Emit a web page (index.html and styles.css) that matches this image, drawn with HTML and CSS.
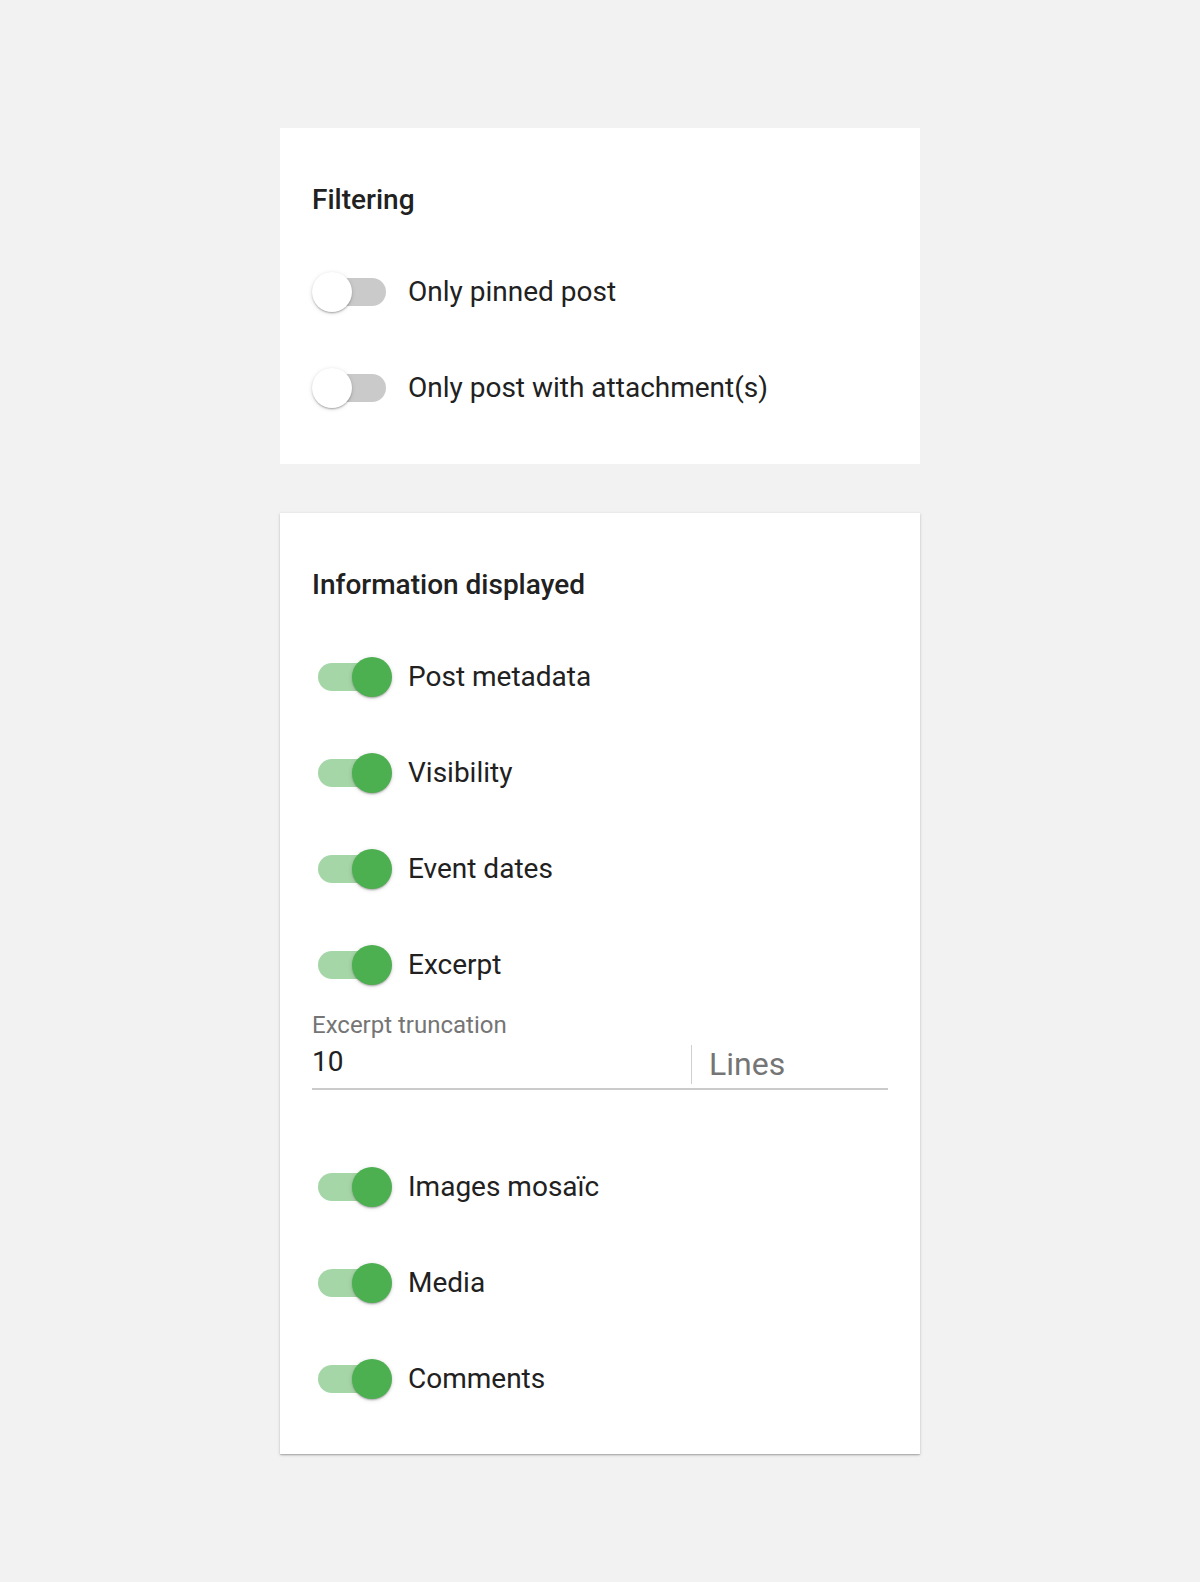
FILE: index.html
```html
<!DOCTYPE html>
<html lang="en">
<head>
<meta charset="utf-8">
<title>Settings</title>
<link rel="stylesheet" href="styles.css">
</head>
<body>
<main class="page">
  <section class="card card-flat">
    <h2 class="card-title">Filtering</h2>
    <div class="toggle-row">
      <span class="switch"><span class="track"></span><span class="thumb"></span></span>
      <span class="toggle-label">Only pinned post</span>
    </div>
    <div class="toggle-row">
      <span class="switch"><span class="track"></span><span class="thumb"></span></span>
      <span class="toggle-label">Only post with attachment(s)</span>
    </div>
  </section>

  <section class="card card-raised">
    <h2 class="card-title">Information displayed</h2>
    <div class="toggle-row">
      <span class="switch on"><span class="track"></span><span class="thumb"></span></span>
      <span class="toggle-label">Post metadata</span>
    </div>
    <div class="toggle-row">
      <span class="switch on"><span class="track"></span><span class="thumb"></span></span>
      <span class="toggle-label">Visibility</span>
    </div>
    <div class="toggle-row">
      <span class="switch on"><span class="track"></span><span class="thumb"></span></span>
      <span class="toggle-label">Event dates</span>
    </div>
    <div class="toggle-row">
      <span class="switch on"><span class="track"></span><span class="thumb"></span></span>
      <span class="toggle-label">Excerpt</span>
    </div>
    <div class="field">
      <label class="field-label">Excerpt truncation</label>
      <div class="field-row">
        <span class="field-value">10</span>
        <span class="field-adorn">Lines</span>
      </div>
    </div>
    <div class="toggle-row">
      <span class="switch on"><span class="track"></span><span class="thumb"></span></span>
      <span class="toggle-label">Images mosaïc</span>
    </div>
    <div class="toggle-row">
      <span class="switch on"><span class="track"></span><span class="thumb"></span></span>
      <span class="toggle-label">Media</span>
    </div>
    <div class="toggle-row">
      <span class="switch on"><span class="track"></span><span class="thumb"></span></span>
      <span class="toggle-label">Comments</span>
    </div>
  </section>
</main>
</body>
</html>
```

FILE: styles.css
```css
html, body {
  margin: 0;
  padding: 0;
}
body {
  background: #f2f2f2;
  font-family: Roboto, "Liberation Sans", Arial, sans-serif;
  color: #212121;
  min-height: 1582px;
}
.page {
  width: 640px;
  margin-left: 280px;
  padding-top: 128px;
  display: flex;
  flex-direction: column;
  gap: 49px;
}
.card {
  background: #fff;
  padding: 56px 32px 28px;
}
.card-raised {
  padding-bottom: 27px;
  box-shadow: 0 1px 3px rgba(0,0,0,0.18), 0 1px 1px rgba(0,0,0,0.10), 0 2px 2px -1px rgba(0,0,0,0.10);
}
.card-title {
  margin: 0 0 28px;
  font-size: 28px;
  line-height: 32px;
  font-weight: 500;
  color: #212121;
}
.toggle-row {
  height: 96px;
  display: flex;
  align-items: center;
}
.switch {
  position: relative;
  width: 96px;
  height: 40px;
  flex: none;
}
.track {
  position: absolute;
  left: 6px;
  top: 6px;
  width: 68px;
  height: 28px;
  border-radius: 14px;
  background: #cacaca;
}
.thumb {
  position: absolute;
  left: 0;
  top: 0;
  width: 40px;
  height: 40px;
  border-radius: 50%;
  background: #ffffff;
  box-shadow: 0 2px 2px -1px rgba(0,0,0,0.2), 0 1px 2px rgba(0,0,0,0.14), 0 1px 5px rgba(0,0,0,0.12);
}
.switch.on .track {
  background: #a5d6a7;
}
.switch.on .thumb {
  left: 40px;
  background: #4caf50;
}
.toggle-label {
  font-size: 28px;
  line-height: 32px;
  color: #212121;
}
.field {
  display: flex;
  flex-direction: column;
  margin-bottom: 49px;
}
.field-label {
  font-size: 24px;
  line-height: 24px;
  color: #757575;
}
.field-row {
  display: flex;
  align-items: flex-start;
  padding: 8px 0 4px;
  border-bottom: 2px solid #cbcbcb;
}
.field-value {
  flex: 1;
  font-size: 28px;
  line-height: 34px;
  color: #212121;
}
.field-adorn {
  width: 179px;
  border-left: 1px solid #cfcfcf;
  padding-left: 17px;
  font-size: 32px;
  line-height: 38px;
  padding-bottom: 1px;
  color: #757575;
}
```
